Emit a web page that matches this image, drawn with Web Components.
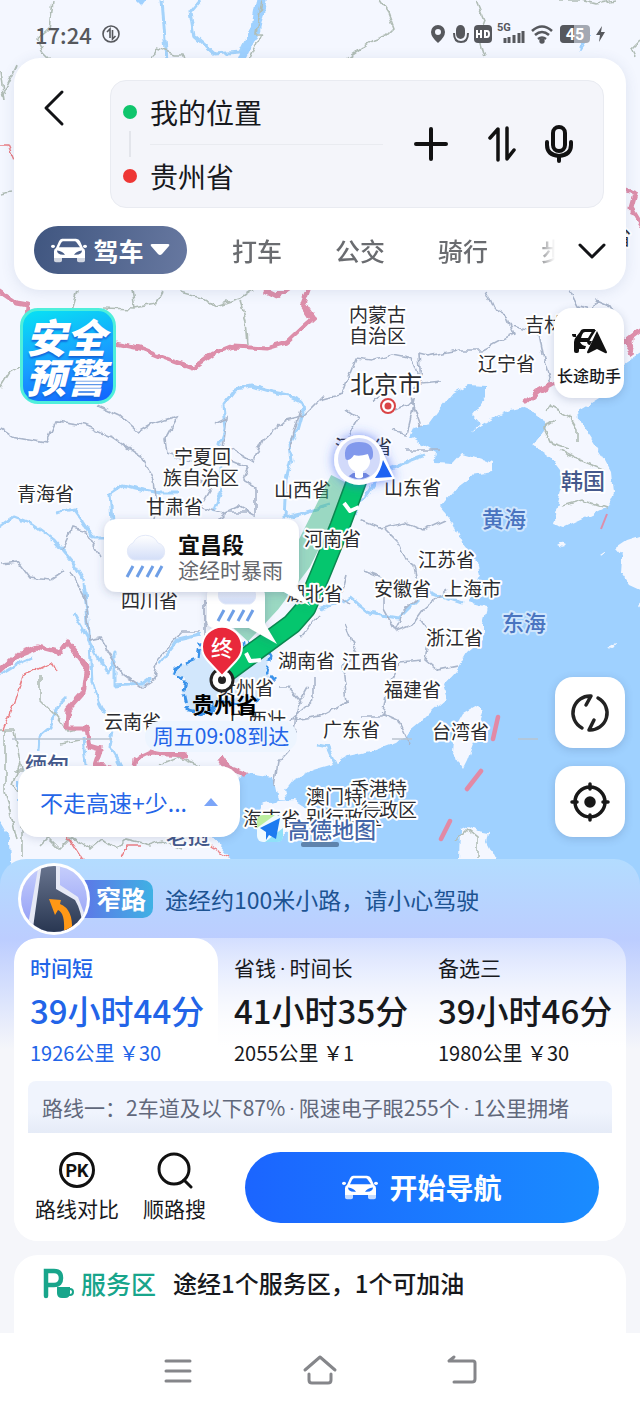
<!DOCTYPE html>
<html lang="zh-CN">
<head>
<meta charset="utf-8">
<meta name="viewport" content="width=device-width, initial-scale=1">
<title>路线规划</title>
<style>
html, body { margin:0; }
body {
  font-family:"Noto Sans CJK SC", sans-serif;
  color:#17191d;
  background:#fdfdfd;
}
</style>
</head>
<body>
<route-page></route-page>

<script>
//shared reset for the controls inside every shadow root
const base = `
  * { box-sizing:border-box; }
  button, input { font:inherit; color:inherit; border:0; background:none; padding:0; margin:0; cursor:pointer; }
  svg { display:block; }
`;

//small helper: each element only needs a tag name and its markup
function define(tag, html){
    const template = document.createElement("template");
    template.innerHTML = html;
    customElements.define(tag, class extends HTMLElement {
        constructor(){
            super();
            this.attachShadow({mode:"open"});
        }
        connectedCallback(){
            if (this.shadowRoot.firstChild) return;
            this.shadowRoot.appendChild(template.content.cloneNode(true));
        }
    });
}

//CAR ICON
define("car-icon", `
<style>:host { display:block; width:36px; height:25px; } svg { display:block; width:100%; height:100%; }</style>
<svg viewBox="0 0 36 30" preserveAspectRatio="none" fill="currentColor" aria-hidden="true">
  <path fill-rule="evenodd" d="M11 1h14q3 0 4 3l3 8q2 1 2 4v8H3v-8q0-3 2-4l3-8q1-3 3-3zM12 4q-1 0-2 2l-2 5h21l-3-5q-1-2-2-2zM6 15q0 5 6 5h2q-2-4-8-5zM31 15q-6 1-8 5h2q6 0 6-5z"/>
  <path d="M3 23h8v4q0 2-2 2H5q-2 0-2-2zM26 23h8v4q0 2-2 2h-4q-2 0-2-2z" opacity=".75"/>
  <circle cx="2" cy="10" r="2"/><circle cx="34" cy="10" r="2"/>
</svg>`);

//STATUS BAR
define("status-bar", `
<style>${base}
:host { display:flex; align-items:center; height:58px; padding:10px 35px 0; color:#56585d; }
time { font-size:22px; font-weight:500; line-height:32px; margin-right:9px; }
.right { display:flex; align-items:center; gap:5px; margin-left:auto; }
</style>
<time>17:24</time>
<svg width="20" height="20" viewBox="0 0 20 20" fill="none" stroke="currentColor" stroke-width="1.6"><circle cx="10" cy="10" r="8"/><path d="M6 8l3-3v9M11.500 6v9l3-3"/></svg>
<div class="right">
  <svg width="18" height="20" viewBox="0 0 18 20"><path fill="currentColor" fill-rule="evenodd" d="M9 1a7 7 0 0 1 7 7q0 5-7 11Q2 13 2 8a7 7 0 0 1 7-7zm0 4a3 3 0 1 0 0 6 3 3 0 0 0 0-6z"/></svg>
  <svg width="17" height="20" viewBox="0 0 17 20"><rect x="4" y="1" width="9" height="14" rx="5" fill="currentColor"/><path d="M2 9q0 9 7 9t7-9" fill="none" stroke="currentColor" stroke-width="2"/></svg>
  <svg width="18" height="20" viewBox="0 0 18 20"><rect y="1" width="18" height="18" rx="4" fill="currentColor"/><path d="M3 6v8M7 6v8M3 10h4M11 7v6h2q2 0 2-3t-2-3z" fill="none" stroke="#fff" stroke-width="2"/></svg>
  <svg width="28" height="24" viewBox="0 0 28 24"><text x="0" y="9" font-size="11" font-weight="700" font-family="Roboto" fill="currentColor">5G</text><path d="M8 21v-5M12 21v-6M17 21v-8M22 21v-10M26 21V9" stroke="currentColor" stroke-width="3"/></svg>
  <svg width="24" height="20" viewBox="0 0 24 20" fill="none" stroke="currentColor" stroke-width="2.6"><path d="M2 7q10-9 20 0M5 11q7-6 14 0M8 15q4-3 8 0"/><circle cx="12" cy="17" r="1.4" fill="currentColor"/></svg>
  <svg width="32" height="20" viewBox="0 0 32 20"><rect x="1" y="1" width="30" height="18" rx="4" fill="#a4a9b3"/><path d="M15 1H5a4 4 0 0 0-4 4v10a4 4 0 0 0 4 4h10z" fill="currentColor"/><text x="16" y="16" text-anchor="middle" font-size="16" font-weight="700" font-family="Roboto" fill="#fff">45</text></svg>
  <svg width="9" height="18" viewBox="0 0 9 18"><path d="M6 1L0 10h4l-1 7 6-10H5z" fill="currentColor"/></svg>
</div>`);

//SEARCH CARD
define("search-card", `
<style>${base}
:host { display:block; margin:0 14px; padding:22px 22px 16px 0; border-radius:26px; background:#fff; box-shadow:0 2px 14px rgba(60,80,130,.12); }
.top { display:flex; align-items:flex-start; }
.back { width:96px; height:56px; display:flex; align-items:center; padding-left:28px; }
.box { flex:1; height:128px; display:flex; align-items:center; background:#f4f5fa; border:1px solid #e9ebf1; border-radius:16px; padding:0 28px 0 12px; }
.fields { flex:1; min-width:0; }
label { display:flex; align-items:center; gap:13px; height:64px; position:relative; }
label i { width:14px; height:14px; border-radius:50%; background:#0fc56c; flex:none; }
label.to i { background:#ee3634; }
label.to::before { content:""; position:absolute; left:6px; top:-13px; height:26px; border-left:2px solid #e3e5eb; }
label.to::after { content:""; position:absolute; left:27px; right:30px; top:0; border-top:1px solid #e9ebf0; }
input { width:100%; min-width:0; font-size:28px; line-height:40px; height:40px; }
.tools { display:flex; align-items:center; gap:22px; }
.tools button:first-child { margin-right:10px; }
.modes { display:flex; align-items:center; margin-top:18px; padding-left:20px; font-size:25px; font-weight:500; color:#6a6c70; }
.drive { display:flex; align-items:center; justify-content:center; width:153px; height:48px; gap:6px; border-radius:24px; color:#fff; font-weight:700; background:linear-gradient(100deg,#405680,#6778a0); flex:none; }
nav { flex:1; min-width:0; overflow:hidden; display:flex; gap:53px; margin-left:45px; -webkit-mask-image:linear-gradient(90deg,#000 94%,transparent 100%); }
nav button { flex:none; }
.more { flex:none; margin:0 -3px 0 22px; }
</style>
<div class="top">
  <button class="back" aria-label="返回"><svg width="24" height="40" viewBox="0 0 24 40" fill="none" stroke="#121316" stroke-width="3" stroke-linecap="round" stroke-linejoin="round"><path d="M20 4L4 20l16 16"/></svg></button>
  <div class="box">
    <div class="fields">
      <label class="from"><i></i><input aria-label="起点" value="我的位置"></label>
      <label class="to"><i></i><input aria-label="终点" value="贵州省"></label>
    </div>
    <div class="tools">
      <button aria-label="添加途经点"><svg width="36" height="36" viewBox="0 0 36 36" stroke="#111" stroke-width="4" stroke-linecap="round"><path d="M3 18h30M18 3v30"/></svg></button>
      <button aria-label="交换起终点"><svg width="40" height="36" viewBox="0 0 40 36" fill="none" stroke="#111" stroke-width="3.5" stroke-linecap="round" stroke-linejoin="round"><path d="M9 12l8-9v31M26 2v31l7-9"/></svg></button>
      <button aria-label="语音"><svg width="32" height="40" viewBox="0 0 32 40" fill="none" stroke="#111" stroke-width="4" stroke-linecap="round"><rect x="10" y="3" width="12" height="24" rx="6"/><path d="M4 18v3q0 10 12 11 12-1 12-11v-3M16 32v5"/></svg></button>
    </div>
  </div>
</div>
<div class="modes">
  <button class="drive"><car-icon></car-icon><span>驾车</span><svg width="20" height="12" viewBox="0 0 20 12" fill="#fff"><path d="M2 0h16q2 0 1 2l-7 8q-2 2-4 0L1 2Q0 0 2 0z"/></svg></button>
  <nav aria-label="出行方式"><button>打车</button><button>公交</button><button>骑行</button><button>步行</button></nav>
  <button class="more" aria-label="更多"><svg width="30" height="30" viewBox="0 0 30 30" fill="none" stroke="#121316" stroke-width="3" stroke-linecap="round" stroke-linejoin="round"><path d="M3 10l12 12 12-12"/></svg></button>
</div>`);

//MAP - names are drawn from these lists: x, y (middle of the line), text, kind
const places = [
    [349, 313, "内蒙古"], [349, 334, "自治区"], [525, 323, "吉林省"], [478, 362, "辽宁省"],
    [350, 382, "北京市", "city"], [335, 445, "河北省"], [384, 486, "山东省"], [174, 455, "宁夏回"],
    [163, 476, "族自治区"], [17, 492, "青海省"], [146, 505, "甘肃省"], [274, 488, "山西省"],
    [418, 558, "江苏省"], [374, 587, "安徽省"], [444, 587, "上海市"],
    [121, 599, "四川省"], [426, 636, "浙江省"], [278, 659, "湖南省"],
    [342, 660, "江西省"], [384, 688, "福建省"], [323, 728, "广东省"], [432, 730, "台湾省"],
    [104, 720, "云南省"], [217, 686, "贵州省"], [229, 718, "广西壮"], [350, 787, "香港特"], [360, 808, "行政区"],
    [306, 795, "澳门特"], [306, 816, "别行政区"], [243, 817, "海南省"], [612, 236, "省"],
    [482, 517, "黄海", "sea"], [502, 621, "东海", "sea"], [561, 479, "韩国", "land"],
    [25, 763, "缅甸", "land"], [166, 834, "老挝", "land"]
];
//these two lie over the route line
const placesOnRoute = [[304, 537, "河南省"], [286, 592, "湖北省"]];

define("route-map", `
<style>
:host { display:block; overflow:hidden; background:#f4f7ff; }
svg { display:block; width:100%; height:100%; }
text { dominant-baseline:central; font-size:19px; fill:#2b2c30; paint-order:stroke; stroke:#fff; stroke-width:4px; stroke-linejoin:round; }
.city { font-size:24px; }
.sea { font-size:22px; font-weight:500; fill:#4a74c0; stroke:#cfe6fd; }
.land { font-size:22px; font-weight:500; fill:#45598c; }
.plain { stroke:none; }
.thin { fill:none; stroke:#a9b5ca; stroke-width:1.6; }
.abroad { fill:none; stroke:#b1bdb6; stroke-width:1.6; }
.river { fill:none; stroke:#a4d3fb; stroke-width:3; stroke-linejoin:round; }
.pink { fill:none; stroke:#dd8eaa; stroke-width:5; stroke-linejoin:round; }
.red { fill:none; stroke:#ea7f85; stroke-width:1.4; }
</style>
<svg viewBox="0 0 640 890" preserveAspectRatio="xMidYMin slice" role="img" aria-label="地图">
  <defs>
    <filter id="rough" x="0" y="0" width="640" height="890" filterUnits="userSpaceOnUse"><feTurbulence type="fractalNoise" baseFrequency=".1" numOctaves="2" seed="4"/><feDisplacementMap in="SourceGraphic" scale="7" xChannelSelector="R" yChannelSelector="G"/></filter>
    <filter id="soft" x="-20%" y="-20%" width="140%" height="150%"><feDropShadow dx="0" dy="2" stdDeviation="4" flood-color="#405078" flood-opacity=".25"/></filter>
    <filter id="glow" x="-40%" y="-40%" width="180%" height="180%"><feDropShadow dx="0" dy="0" stdDeviation="6" flood-color="#3d63f0" flood-opacity=".7"/></filter>
    <linearGradient id="cloud" x2="0" y2="1"><stop stop-color="#fff"/><stop offset="1" stop-color="#d3def8"/></linearGradient>
    <clipPath id="face"><circle cx="359" cy="459" r="20"/></clipPath>
    <g id="rain"><path d="M12 27a9 9 0 0 1-1-17 14 14 0 0 1 25 0 9 9 0 0 1 1 17z" fill="url(#cloud)" stroke="#e3e9f9"/><path d="M11 33l-6 11M21 33l-6 11M31 33l-6 11M40 33l-6 11" stroke="#6f9fe6" stroke-width="3"/></g>
  </defs>
  <rect width="640" height="890" fill="#f4f7ff"/>
  <g filter="url(#rough)">
    <path fill="#9fd1ff" d="M660 340L623 365 608 392 590 403 578 410 579 422 590 437 603 457 611 472 613 493 607 507 587 517 565 527 553 523 558 503 562 487 560 470 550 457 533 445 547 427 538 413 523 407 510 410 490 420 470 432 480 423 473 415 487 397 487 386 467 385 453 393 438 412 430 423 415 427 410 437 423 445 437 453 435 462 453 463 462 453 493 462 492 472 473 475 457 487 440 507 453 523 463 543 477 560 480 577 468 602 487 607 483 623 483 640 467 653 457 670 443 685 447 698 433 710 420 723 397 742 370 752 347 757 337 763 313 770 293 780 285 790 287 800 278 800 273 777 247 773 233 783 213 837 230 857 235 900 660 900z"/>
    <path fill="#9fd1ff" d="M-10 815L0 823 10 840 13 900H-10zM17 780l18 12-6 16-12-6z"/>
    <path fill="#f4f7ff" d="M262 805l16-4 16-1 16 10-8 14-18 12-18-8-8-12zM477 705l7 5-7 23-10 27-4 8-11-17 2-22 9-16zM460 830l8-4 10 5 11 2-2 10 8 16v40h-38l2-40zM660 530l-33 10-12 8 8 9-1 16 8 12 30 14zM557 545q5-4 10-1-3 5-10 1zM608 648l10-6-6 7zM600 557l6-4-3 5zM638 605l4-5-2 8z"/>
    <path class="river" d="M213 512L222 490 221 470 220 445 225 430 223 405 235 389 252 386 273 392 288 395 302 402 303 412 298 430 289 445 291 460 286 480 284 518 300 514 330 505M0 527l14-10 18 7 22 16 20 24 10 16M112 521l-2-28 12-8 18 4 20 4 18 0M56 513l18-4 10 14 10 15 12 0M425 455l-26 10-20 8-10 18-15 20-10 12M0 675l18-11 14-6M84 582l6 60 2 40 6 20 6 12M73 612l14 24 14 26 8 12 6-22 0 34 28-2 8-6M160 663l18-23 22-5M67 697l-10 10-6 20-12 10-1 14M83 737l3 28M113 732l-3 14 8 14 4 8M320 610l15-5 16-7 18 15 30 5 10-10 12-12M318 745l10 2 8 18M462 603l-30-10-14-12"/>
    <path class="river" d="M200 0l-10 12 4 24 20 18 26-2 6-12M162 0l3 40 2 20"/>
    <path d="M268-5l-8 36-14 28h-8l14-36 5-28zM134-2l14 0-6 8zM582 34l10 0-4 6-8 12z" fill="#9fd1ff"/>
    <path class="abroad" d="M52 0l-3 30-12 10 6 12 8 8M262 0l-6 34 6 0-12 26M150 60l6-12 18 6 9 0 2 6M380 0l8 12 6 16-8 8-12 4-20 14-8 6M476 0l8 20-6 16 6 22M556 0l24 0 16 4 20-4M16 66l-14 30M640 40l-8 8 4 8M78 290l-7 24M132 290l3 19-32-1M135 308l20-4 8-14M180 292l22 6 14 8 24-8 12-8M240 300l6 20 2 24M0 388l10-16 14-8M0 70l4 30M0 194l12-2M544 410l6-4 22 12 6 10 0 14M560 450l20 10 24 10M556 420l-12 8 6 14 18 6M562 506l20-6 24 8M40 674l0 26 10 10 8 8 10 14 8-2M0 730l14 0 8 40M5 730v60l12 50M20 764l-8 20 10 14 0 60M14 770h20M60 745l20-4M455 840l12-12 10 8 0 22M40 845l8-8 12 12 12-12 18 12 12-10 14 10 10-10 24 6 12-4 20 8M160 765l20-8 20 8 14 6M140 780l20-10 18 6"/>
    <path class="thin" d="M0 429l12 8 34 6 10-22 28 4 28 12 30 20 12 24 3 24-4 20-16 4 0 6M98 406l22 10 18 16 14-8 26-8-12 22 2 16 20 8 22 4M215 424l12-6-4 30 10 2 20 12 10-22 22-20 20-5 20-20M200 480l12 6-12 20 22 8 16-8 18 10 0-28-14-8 6-12-24-10M218 520l8-8 22 0M62 550l10-22 14 4 14 24M0 564l18-2 12 16 20 2 12-8M70 572l16 28 4 40 10-2 22 36 20 14 12-8 4-22 24-26 18 0M205 640l0-40M320 400l22-6 14-36 16 2 20-6 20 4 10 26 20-2M485 290l8 18 12 6 8 20-30 16-24 0-32 6-8-2 2 30-12 8 12 34M513 326l26 8 6 30 6 20M570 290l8 16 14 4 4-10 14 6 10 18M395 410l20-10-8 34-16-4M372 400l12-6 0-6M347 410l12 8-14 24 10 18M440 450l-34 0M360 520l20 8 24-6 20 8 22-10M384 528l14 14 8 18 8 6 4 20M363 570l20 8 0 30 12 22 10-20 12-12 0-12M347 575l-6 22 8 8M345 624l12 30-14 14 4 34-26 14-30 4 24-22 0-20M360 716l22 0 6-30 12-24 22-2M420 620l10 14-4 26 12 10 20-4M396 630l16-6 10-14 24-20M380 712l18 8 12 26M300 700l-12-14-10 0M308 686l-10 18-4 40-16 18-4 24M318 615l-18 22M289 450l12-40"/>
    <path class="pink" d="M-5 288L17 303 28 305 27 315M115 343l25 5 20 8 33 12 20-14 20-8 34 2 20-6 16-15 10-9-10-15 6-16M525 403l12-11 22-12M612 336l14 6 16-12M626 342l8 12M625 190l10 4-4 14 12 20M265 290l12 6 12-8M-5 674L0 670 17 655 37 647 60 653 68 642 87 667 83 693 68 710 67 728 87 728 90 747 100 750 95 765 110 768M133 772l2-12 15-7 37 2M220 757l7 10 20 8"/>
    <path class="red" d="M0 145h8l6 14M3 730l12-30 8-24 30-14 4 8M68 838l14 22M140 846l-12 0-6 12M210 846l20 12"/>
    <path d="M174 668l24-10 2-14 24-6 18 8 20-4 8 14-4 16 8 8-14 18-20 8-20-6-12 14-20-4-4-18 2-12-14-6z" fill="#d2e7fc" stroke="#3a93ea" stroke-width="3" stroke-dasharray="9 4"/>
  </g>
  <path d="M12 739h100M392 739h20M518 739h20" stroke="#b9c3cf" stroke-width="1.5"/>
  <path d="M498 717l-5 22M481 771l-14 18M450 821l-9 18" stroke="#e289a5" stroke-width="4.500" stroke-linecap="round"/>
  <path d="M607 514l-6 15" stroke="#dd8eaa" stroke-width="2"/>
  <g id="places"></g>
  <g fill="none" stroke-linejoin="round">
    <path d="M341 480L300 562 270 602 240 634" stroke="#3fba86" stroke-opacity=".5" stroke-width="22"/>
    <path d="M357 480L340 526 320 575 306 608 292 624 228 671" stroke="#0b8750" stroke-width="21"/>
    <path d="M357 480L340 526 320 575 306 608 292 624 228 671" stroke="#05c66e" stroke-width="18"/>
    <path d="M344 503l6 8 9-4M246 653l4 8 11-1" stroke="#fff" stroke-width="4"/>
  </g>
  <g id="places-on-route"></g>
  <circle cx="388" cy="406" r="7" fill="#fff" stroke="#d94446" stroke-width="2"/><circle cx="388" cy="406" r="3.500" fill="#d94446"/>

  <g filter="url(#soft)"><path d="M215 588h42q8 0 8 8v28l12 20-28-16h-34q-8 0-8-8v-24q0-8 8-8z" fill="#fff"/></g>
  <use href="#rain" x="213" y="577"/>
  <g filter="url(#soft)"><path d="M118 519h167q14 0 14 14v45q0 5-3 8l14 20-26-14H118q-14 0-14-14v-45q0-14 14-14z" fill="#fff"/></g>
  <use href="#rain" x="122" y="533"/>
  <text class="plain" x="178" y="543" style="font-size:22px;font-weight:700;fill:#111">宜昌段</text>
  <text class="plain" x="178" y="569" style="font-size:21px;fill:#66686d">途经时暴雨</text>

  <circle cx="222" cy="680" r="11" fill="#fff" stroke="#222" stroke-width="3"/><circle cx="222" cy="680" r="4" fill="#222"/>
  <path d="M222 676l-14-15a20 20 0 1 1 28 0z" fill="#e9283b" stroke="#fff" stroke-width="2"/>
  <text class="plain" x="222" y="646" text-anchor="middle" style="font-size:22px;font-weight:500;fill:#fff">终</text>
  <text class="plain" x="192" y="703" style="font-size:22px;font-weight:700;fill:#000">贵州省</text>
  <rect x="145" y="721" width="152" height="31" rx="15" fill="#edf5ff"/>
  <text class="plain" x="221" y="735" text-anchor="middle" style="font-size:21px;fill:#2264e8">周五09:08到达</text>

  <g filter="url(#glow)"><path d="M380 446l15 33-30 4z" fill="#fff"/><circle cx="359" cy="460" r="25" fill="#fff"/></g>
  <path d="M383 460l9 17-17 1q6-8 8-18z" fill="#1f63f2"/>
  <circle cx="359" cy="459" r="21" fill="#d2dafa"/>
  <g clip-path="url(#face)"><path d="M345 479l8-6h13l8 6v8h-29z" fill="#6d84df"/><path d="M355 468h8v9q-4 3-8 0z" fill="#fff"/><circle cx="359" cy="461" r="11" fill="#fff"/><path d="M345 456q-1-14 14-14t14 13q0 4-3 5l-2-6q-9 3-14 1-3 5-7 5-2-1-2-4z" fill="#8299ec"/></g>

  <g><rect x="257" y="815" width="26" height="27" rx="6" fill="#effaff"/><path d="M257 828v-7q0-6 6-6h12z" fill="#bdf0a0"/><path d="M283 828v8q0 6-6 6h-12z" fill="#8fe0f8"/><path d="M260 828l20-10-4 21-7-4-3 5v-8z" fill="#1d7bf0"/></g>
  <text x="288" y="828" style="font-size:22px;font-weight:500;fill:#4466a8">高德地图</text>
  <rect x="301" y="842" width="38" height="5" rx="2" fill="#5e83ad"/>
</svg>`);

//write the place names into the map once it is on the page
document.addEventListener("DOMContentLoaded", drawPlaces);
function drawPlaces(){
    const map = document.querySelector("route-page").shadowRoot.querySelector("route-map");
    const draw = (id, list) => {
        map.shadowRoot.getElementById(id).innerHTML = list
            .map(([x, y, name, kind = "province"]) => `<text class="${kind}" x="${x}" y="${y}">${name}</text>`).join("");
    };
    draw("places", places);
    draw("places-on-route", placesOnRoute);
}

//WHITE SQUARE BUTTON THAT FLOATS OVER THE MAP
define("map-button", `
<style>${base}
:host { display:block; width:70px; }
button { display:flex; flex-direction:column; align-items:center; justify-content:center; gap:4px; width:100%; min-height:71px; border-radius:18px; background:#fff; box-shadow:0 2px 8px rgba(50,70,110,.2); font-size:16px; line-height:24px; font-weight:500; white-space:nowrap; }
:host([tall]) button { min-height:90px; padding-top:10px; gap:8px; }
</style>
<button><slot></slot></button>`);

define("safety-badge", `
<style>${base}
button { width:96px; height:96px; padding-right:4px; border:3px solid #4fefdb; border-radius:18px; background:linear-gradient(165deg,#08e2f4,#189cff 55%,#1261ff); color:#fff; font-size:40px; line-height:40px; font-weight:900; font-style:italic; text-shadow:0 2px 2px #1566da; }
</style>
<button>安全<br>预警</button>`);

define("preference-chip", `
<style>${base}
:host { display:block; }
button { display:flex; align-items:center; justify-content:space-between; width:222px; height:71px; padding:0 22px; border-radius:20px; background:#fff; color:#2465e8; font-size:23px; white-space:nowrap; box-shadow:0 2px 8px rgba(50,70,110,.16); }
</style>
<button aria-haspopup="listbox"><span>不走高速+少...</span><svg width="14" height="8" viewBox="0 0 14 8"><path d="M7 0l7 8H0z" fill="#7ba5f8"/></svg></button>`);

//ONE ROUTE: name, time, cost
define("route-option", `
<style>${base}
:host { display:block; min-width:0; }
button { display:block; width:100%; text-align:left; padding:15px 0 14px 16px; white-space:nowrap; }
:host([selected]) button { background:#fff; border-radius:24px 24px 0 0; color:#2264e8; }
span { display:block; }
.name { font-size:21px; line-height:28px; }
:host([selected]) .name { font-weight:500; }
.time { font-size:33px; line-height:44px; font-weight:500; margin:7px 0; }
.cost { font-size:20px; line-height:28px; }
</style>
<button role="tab"><span class="name"><slot name="name"></slot></span><span class="time"><slot name="time"></slot></span><span class="cost"><slot></slot></span></button>`);

define("quick-action", `
<style>${base}
button { display:flex; flex-direction:column; align-items:center; gap:4px; font-size:21px; line-height:30px; white-space:nowrap; }
</style>
<button><slot name="icon"></slot><slot></slot></button>`);

//BOTTOM SHEET
define("route-sheet", `
<style>${base}
:host { display:block; position:relative; padding:0 14px; border-radius:26px 26px 0 0; background:linear-gradient(#b3dcff 0,#bccdff 80px,#f5f6fa 190px); }
.warning { display:flex; align-items:center; height:79px; padding-left:4px; font-size:23px; color:#1c5392; white-space:nowrap; }
.warning svg { flex:none; position:relative; }
.tag { margin:0 12px 0 -10px; padding-left:16px; width:73px; height:38px; line-height:36px; border-radius:4px 10px 10px 4px; background:linear-gradient(90deg,#5e75e7,#3fb1e4); color:#fff; font-size:25px; font-weight:700; }
.card { border-radius:24px; background:linear-gradient(rgba(255,255,255,.35),#fff 110px); overflow:hidden; }
.options { display:grid; grid-template-columns:repeat(3,1fr); }
.dot { font-family:Roboto, sans-serif; line-height:0; margin:0 4px; }
.note { margin:0 14px; padding-left:14px; height:52px; line-height:52px; border-radius:8px 8px 0 0; background:linear-gradient(#f0f4fd 60%,#e5ebf7); color:#61687b; font-size:21px; white-space:nowrap; overflow:hidden; }
.actions { display:flex; align-items:center; height:108px; padding:0 27px 0 21px; gap:24px; background:#fff; }
.start { flex:1; display:flex; align-items:center; justify-content:center; gap:11px; height:71px; margin-left:15px; border-radius:36px; background:linear-gradient(90deg,#1b65ff,#1a8cff); color:#fff; font-size:28px; font-weight:700; }
.service { display:flex; align-items:center; gap:17px; margin-top:14px; padding:8px 28px 30px; border-radius:24px 24px 0 0; background:#fff; font-size:24px; line-height:40px; font-weight:500; white-space:nowrap; }
.area { display:flex; align-items:center; gap:7px; color:#18a58b; font-size:25px; }
</style>
<div class="warning">
  <svg width="72" height="72" viewBox="0 0 72 72"><defs><clipPath id="c"><circle cx="36" cy="36" r="33"/></clipPath><linearGradient id="r" x2="0" y2="1"><stop stop-color="#6a7690"/><stop offset="1" stop-color="#26344f"/></linearGradient><linearGradient id="s" x2="0" y2="1"><stop stop-color="#c8d0fc"/><stop offset="1" stop-color="#8c98f5"/></linearGradient></defs>
    <circle cx="36" cy="36" r="36" fill="#fff"/>
    <g clip-path="url(#c)"><path d="M0 0h72v72H0z" fill="url(#s)"/><path d="M21 0L10 62l6 10h50V50L60 34 42 22V0z" fill="#e6e9f6"/><path d="M24 0L14 72h52q-2-24-9-35L38 26V0z" fill="url(#r)"/><path d="M46 68q1-18-6-21l-3 5-6-16 12 1-1 4q13 5 12 26z" fill="#ff9816"/></g></svg>
  <b class="tag">窄路</b><span>途经约100米小路，请小心驾驶</span>
</div>
<div class="card">
  <div class="options" role="tablist">
    <route-option selected><span slot="name">时间短</span><span slot="time">39小时44分</span>1926公里 ￥30</route-option>
    <route-option><span slot="name">省钱<span class="dot">·</span>时间长</span><span slot="time">41小时35分</span>2055公里 ￥1</route-option>
    <route-option><span slot="name">备选三</span><span slot="time">39小时46分</span>1980公里 ￥30</route-option>
  </div>
  <div class="note">路线一：2车道及以下87%<span class="dot">·</span>限速电子眼255个<span class="dot">·</span>1公里拥堵</div>
  <div class="actions">
    <quick-action><svg slot="icon" width="38" height="38" viewBox="0 0 38 38"><circle cx="19" cy="19" r="16.500" fill="none" stroke="#111" stroke-width="3"/><text x="19" y="26" text-anchor="middle" font-size="18" font-weight="700" font-family="Roboto" fill="#111">PK</text></svg>路线对比</quick-action>
    <quick-action><svg slot="icon" width="38" height="38" viewBox="0 0 38 38" fill="none" stroke="#111" stroke-width="3" stroke-linecap="round"><circle cx="18" cy="18" r="15"/><path d="M28 29l7 7"/></svg>顺路搜</quick-action>
    <button class="start"><car-icon></car-icon><span>开始导航</span></button>
  </div>
</div>
<div class="service">
  <span class="area"><svg width="32" height="32" viewBox="0 0 32 32"><path d="M4 29V4h8q7 0 7 7t-7 7H5" fill="none" stroke="#18a58b" stroke-width="4.500" stroke-linecap="round"/><path d="M15 20h13v6q0 5-5 5h-3q-5 0-5-5z" fill="#18a58b"/><circle cx="28" cy="25" r="3" fill="none" stroke="#18a58b" stroke-width="2"/></svg>服务区</span>
  <span>途经1个服务区，1个可加油</span>
</div>`);

//SYSTEM NAVIGATION
define("system-nav", `
<style>${base}
:host { display:flex; justify-content:center; align-items:center; gap:106px; height:75px; background:#fff; }
svg { fill:none; stroke:#85868a; stroke-width:3; stroke-linecap:round; stroke-linejoin:round; }
</style>
<button aria-label="最近任务"><svg width="36" height="36" viewBox="0 0 36 36"><path d="M6 8h24M6 18h24M6 28h24"/></svg></button>
<button aria-label="主页"><svg width="36" height="36" viewBox="0 0 36 36"><path d="M3 17L18 4l15 13M7 21v6q0 3 3 3h16q3 0 3-3v-6"/></svg></button>
<button aria-label="返回"><svg width="36" height="36" viewBox="0 0 36 36"><path d="M10 4L5 8h24q2 0 2 2v16q0 3-3 3H10"/></svg></button>`);

//WHOLE PAGE
define("route-page", `
<style>${base}
:host { display:flex; flex-direction:column; min-height:100vh; }
.stage { position:relative; flex:1; display:flex; flex-direction:column; min-height:700px; }
route-map { position:absolute; inset:0 0 -31px; }
.stage > :not(route-map) { position:relative; }
.row { display:flex; justify-content:space-between; align-items:flex-start; padding:18px 16px 0 20px; }
.bottom { margin-top:auto; align-items:flex-end; padding:0 15px 22px 18px; }
.column { display:flex; flex-direction:column; gap:18px; }
</style>
<div class="stage">
  <route-map></route-map>
  <status-bar></status-bar>
  <search-card></search-card>
  <div class="row">
    <safety-badge></safety-badge>
    <map-button tall><svg width="36" height="26" viewBox="0 0 36 26" fill="#111"><path d="M9 3q1-3 4-3h11l-1 3h-9q-2 0-3 3l-1 3h10l-2 4h-9q2 4 6 4l-1 3H8v2q0 2-2 2H5q-2 0-2-2v-9q0-3 2-5z"/><path d="M20 4l2-3h3l-5 8h-3zM16 12h5l-2 4q-3 0-3-4z"/><path d="M26 2l10 21q0 2-2 1l-8-4-8 4q-2 1-2-1zM1 5h4v3H3q-2 0-2-3z"/></svg>长途助手</map-button>
  </div>
  <div class="row bottom">
    <preference-chip></preference-chip>
    <div class="column">
      <map-button><svg aria-label="刷新" width="40" height="40" viewBox="0 0 40 40" fill="none" stroke="#222" stroke-width="3.5" stroke-linecap="round" stroke-linejoin="round"><path d="M12 35A17 17 0 0 1 21 3l-5 9M28 5A17 17 0 0 1 19 37l5-10"/></svg></map-button>
      <map-button><svg aria-label="定位" width="40" height="40" viewBox="0 0 40 40" fill="none" stroke="#181818" stroke-width="3.5" stroke-linecap="round"><circle cx="20" cy="20" r="15"/><circle cx="20" cy="20" r="4" fill="#181818"/><path d="M20 2v5M20 33v5M2 20h5M33 20h5"/></svg></map-button>
    </div>
  </div>
</div>
<route-sheet></route-sheet>
<system-nav></system-nav>`);
</script>
</body>
</html>
